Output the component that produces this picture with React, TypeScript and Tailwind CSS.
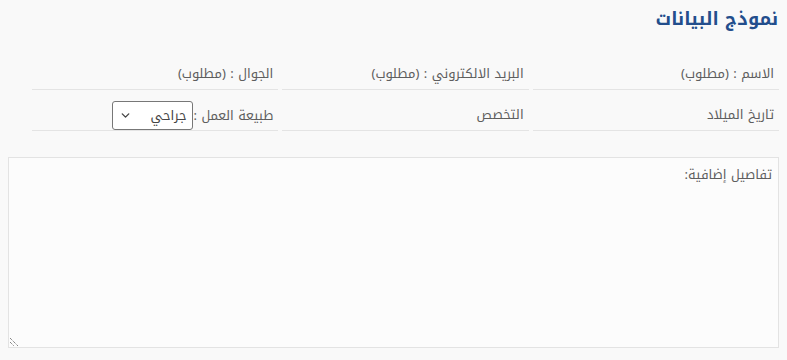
import { ChevronDown } from 'lucide-react'

const font = { fontFamily: '"Noto Kufi Arabic", "Noto Sans Arabic", "DejaVu Sans", sans-serif' }

function Field({ label }: { label: string }) {
  return (
    <div className="flex h-[41px] items-end border-b border-[#e4e4e4] pb-[6px] pr-[5px]">
      <span className="text-[13px] text-[#5e5e5e]">{label}</span>
    </div>
  )
}

export default function App() {
  return (
    <main dir="rtl" className="min-h-[360px] bg-[#f9f9f9] px-[8px] pt-[6px]" style={font}>
      <h2 className="pr-[1px] text-[18px] font-bold text-[#234e8c]">نموذج البيانات</h2>

      <div className="mt-[16px] grid w-[747px] grid-cols-3 gap-x-1">
        <Field label="الاسم : (مطلوب)" />
        <Field label="البريد الالكتروني : (مطلوب)" />
        <Field label="الجوال : (مطلوب)" />
        <Field label="تاريخ الميلاد" />
        <Field label="التخصص" />
        <div className="flex h-[41px] items-end border-b border-[#e4e4e4] pr-[5px]">
          <div className="flex items-center text-[13px] text-[#5e5e5e]">
            <span>طبيعة العمل :</span>
            <div className="flex h-[29px] w-[81px] items-center justify-between rounded-[3px] border border-[#777] bg-white px-[6px] text-[13px] text-[#444]">
              <span>جراحي</span>
              <ChevronDown size={13} strokeWidth={2.5} className="text-[#444]" />
            </div>
          </div>
        </div>
      </div>

      <div className="relative mt-[26px] h-[191px] w-[771px] border border-[#e3e3e3] bg-[#fcfcfc] px-[6px] pt-[7px] text-[13px] text-[#5e5e5e]">
        تفاصيل إضافية:
        <svg className="absolute bottom-[1px] left-[1px]" width="9" height="9" viewBox="0 0 9 9">
          <path d="M0 1 L8 9 M0 5 L4 9" stroke="#555" strokeWidth="1" strokeDasharray="1 1" />
        </svg>
      </div>
    </main>
  )
}
